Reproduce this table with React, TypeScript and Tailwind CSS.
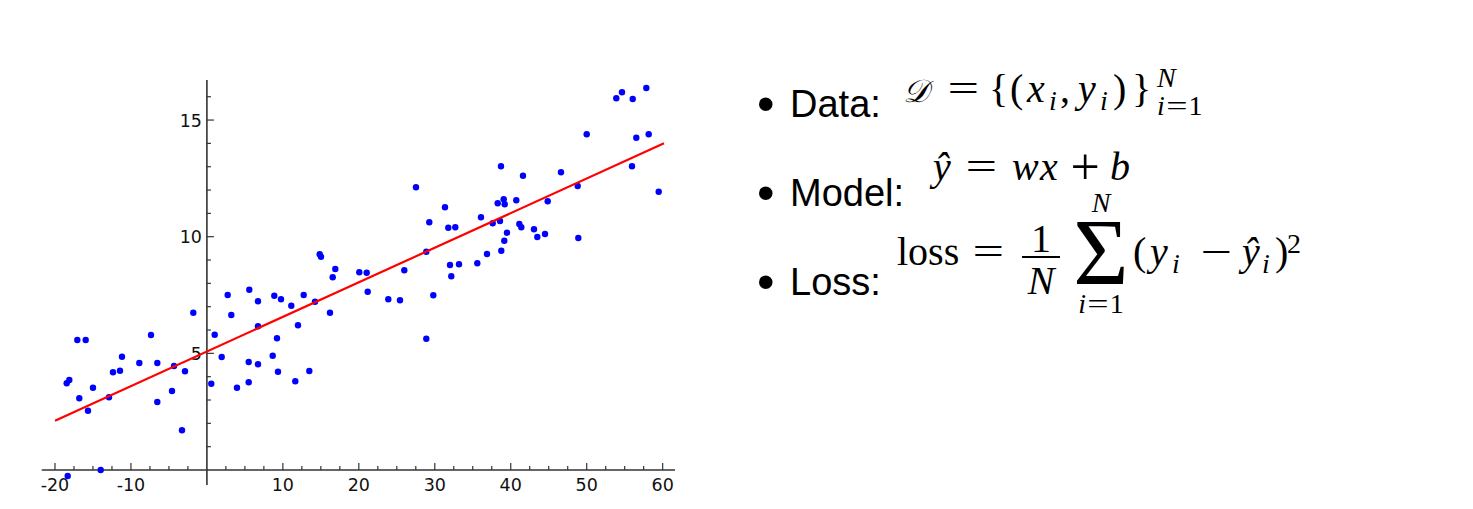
import React from "react";

const X0 = 206.9;
const XS = 7.596;
const Y0 = 470;
const YS = 23.33;
const px = (v: number) => X0 + v * XS;
const py = (v: number) => Y0 - v * YS;

const DOTS: [number, number][] = [
  [66.7, 383.3], [69.3, 380], [77.3, 340], [85.7, 340], [79.3, 398.3], [88, 410.7], [93, 387.7],
  [67.7, 476], [100.7, 470], [109, 397.3], [113, 372.3], [120, 370.7], [122, 356.7], [139.3, 363],
  [151, 335], [157.3, 363], [157.3, 402], [172, 391], [174, 366], [182, 430.3], [185, 371.3],
  [193.3, 312.7], [211.3, 383.7], [214.7, 334.7], [221.7, 357], [227.7, 295], [231.3, 315],
  [237, 387.7], [248.7, 382.3], [248.7, 362], [249.3, 289.7], [258, 301.3], [258, 326.3],
  [258, 364.3], [272.7, 355.7], [274.3, 295.7], [277, 338.3], [278, 371.7], [281, 299.3],
  [291.3, 305.7], [295.3, 381.3], [298, 325.3], [303.7, 295], [309.3, 371], [315, 301.7],
  [319.7, 254.3], [321, 256.7], [330, 312.7], [332.7, 277.3], [335.3, 269], [359.3, 272.3],
  [366.7, 272.7], [367.7, 291.7], [388.3, 299.3], [400, 300.3], [404.3, 270.3], [416, 187.3],
  [426.3, 251.7], [426.3, 338.7], [429.3, 222.3], [433.3, 295.3], [445, 207.3], [448.3, 227.7],
  [450, 265], [451.3, 276.3], [455.3, 227.3], [459, 264.3], [477.3, 263.3], [481, 217.3],
  [487, 254], [492.7, 223.3], [497.7, 203.3], [501, 166.3], [500, 221], [501.3, 250.7],
  [503.7, 199.3], [504.7, 204.3], [504.3, 240.7], [507, 232.7], [516.3, 200.3], [519.3, 224],
  [521.3, 227.3], [523, 175.7], [534, 229.3], [537.3, 237], [545, 234], [547.7, 201.3],
  [561, 172.3], [577.7, 186], [578.3, 238], [586.7, 134.3], [616.3, 98.3], [622, 92.3],
  [632.7, 99], [646.3, 88], [632, 166.3], [636.3, 137.7], [648.7, 134.3], [658.7, 191.7],
];

function Chart() {
  const xTicks: number[] = [];
  for (let v = -20; v <= 60; v += 2.5) if (v !== 0) xTicks.push(v);
  const yTicks: number[] = [];
  for (let v = 1; v <= 16; v++) yTicks.push(v);
  const axis = "#333333";
  return (
    <svg width={700} height={509} viewBox="0 0 700 509" className="shrink-0 block">
      <line x1={41.7} y1={Y0} x2={675} y2={Y0} stroke={axis} strokeWidth={1.6} />
      <line x1={X0} y1={80} x2={X0} y2={485} stroke={axis} strokeWidth={1.6} />
      {xTicks.map((v) => {
        const major = v % 10 === 0;
        return (
          <line key={"xt" + v} x1={px(v)} y1={Y0} x2={px(v)} y2={Y0 - (major ? 7 : 4)} stroke={axis} strokeWidth={1.2} />
        );
      })}
      {yTicks.map((v) => {
        const major = v % 5 === 0;
        return (
          <line key={"yt" + v} x1={X0} y1={py(v)} x2={X0 + (major ? 7 : 4)} y2={py(v)} stroke={axis} strokeWidth={1.2} />
        );
      })}
      {[-20, -10, 10, 20, 30, 40, 50, 60].map((v) => (
        <text key={"xl" + v} x={px(v)} y={491} textAnchor="middle" fontFamily="'DejaVu Sans', sans-serif" fontSize={17.5} fill="#111">
          {v}
        </text>
      ))}
      {[5, 10, 15].map((v) => (
        <text key={"yl" + v} x={202} y={py(v) + 6.6} textAnchor="end" fontFamily="'DejaVu Sans', sans-serif" fontSize={17.5} fill="#111">
          {v}
        </text>
      ))}
      {DOTS.map(([x, y], i) => (
        <circle key={"d" + i} cx={x} cy={y} r={3.2} fill="#0000ff" />
      ))}
      <line x1={55} y1={420.7} x2={664} y2={143.3} stroke="#ff0000" strokeWidth={2.2} />
    </svg>
  );
}

const mathBox =
  "font-['Liberation_Serif',serif] text-[40px] leading-[36px] whitespace-nowrap relative";

function Bullet() {
  return (
    <span className="w-[33px] shrink-0 text-[50px] leading-[20px] relative top-[4px]">•</span>
  );
}

function Eq() {
  return (
    <span className="inline-block w-[40px] text-center">
      <span className="inline-block scale-x-[1.4]">=</span>
    </span>
  );
}

function SmallEq() {
  return <span className="inline-block mx-[4px] scale-x-[1.35]">=</span>;
}

export default function App() {
  return (
    <div className="w-[1473px] h-[509px] bg-white flex overflow-hidden text-black">
      <Chart />
      <div className="flex flex-col pt-[85px] pl-[57px] font-['Liberation_Sans',Arial,sans-serif]">
        {/* Data */}
        <div className="flex items-baseline h-[89px] text-[38px] leading-none">
          <Bullet />
          <span className="w-[113px] shrink-0">Data:</span>
          <span className={`${mathBox} -top-[15px]`}>
            <span className="inline-block w-[40px] italic text-[32px]">𝒟</span>
            <Eq />
            <span className="inline-block w-[27px] pl-[6px]">{"{"}</span>
            <span className="inline-block w-[17px]">(</span>
            <span className="inline-block w-[22px] italic">x</span>
            <span className="inline-block w-[11px] italic text-[28px] relative top-[8px]">i</span>
            <span className="inline-block w-[18px]">,</span>
            <span className="inline-block w-[22px] italic">y</span>
            <span className="inline-block w-[13px] italic text-[28px] relative top-[8px]">i</span>
            <span className="inline-block w-[19px]">)</span>
            <span className="inline-block w-[23px]">{"}"}</span>
            <span className="inline-flex flex-col items-start text-[28px] leading-[28px] relative -top-[15px] ml-[2px]">
              <span className="italic">N</span>
              <span>
                <span className="italic">i</span>
                <SmallEq />
                1
              </span>
            </span>
          </span>
        </div>
        {/* Model */}
        <div className="flex items-baseline h-[89px] text-[38px] leading-none">
          <Bullet />
          <span className="w-[143px] shrink-0">Model:</span>
          <span className={`${mathBox} -top-[26px]`}>
            <span className="inline-block w-[28px] italic">ŷ</span>
            <Eq />
            <span className="inline-block w-[28px] ml-[11px] italic">w</span>
            <span className="inline-block w-[20px] italic">x</span>
            <span className="inline-block w-[50px] text-center">
              <span className="inline-block scale-[1.3]">+</span>
            </span>
            <span className="italic">b</span>
          </span>
        </div>
        {/* Loss */}
        <div className="flex items-baseline h-[89px] text-[38px] leading-none">
          <Bullet />
          <span className="w-[107px] shrink-0">Loss:</span>
          <span className={`${mathBox} -top-[30px]`}>
            <span className="inline-block w-[71px]">loss</span>
            <Eq />
            <span className="inline-flex flex-col items-center w-[50px] ml-[8px] relative -top-[13px]">
              <span className="leading-[34px]">1</span>
              <span className="h-[1.5px] w-[38px] bg-black"></span>
              <span className="italic leading-none mt-[3px]">N</span>
            </span>
            <span className="inline-flex flex-col items-center w-[64px] ml-[3px] relative -top-[53px]">
              <span className="italic text-[28px] leading-[28px]">N</span>
              <span className="block text-[95px] leading-[73px]">Σ</span>
              <span className="text-[28px] leading-[28px]">
                <span className="italic">i</span>
                <SmallEq />
                1
              </span>
            </span>
            <span className="inline-block w-[17px]">(</span>
            <span className="inline-block w-[22px] italic">y</span>
            <span className="inline-block w-[22px] italic text-[28px] relative top-[8px]">i</span>
            <span className="inline-block w-[44px] text-center">
              <span className="inline-block scale-x-[1.4]">−</span>
            </span>
            <span className="inline-block w-[24px] pl-[4px] italic">ŷ</span>
            <span className="inline-block w-[13px] italic text-[28px] relative top-[8px]">i</span>
            <span className="inline-block w-[12px]">)</span>
            <span className="text-[28px] relative -top-[12px]">2</span>
          </span>
        </div>
      </div>
    </div>
  );
}
